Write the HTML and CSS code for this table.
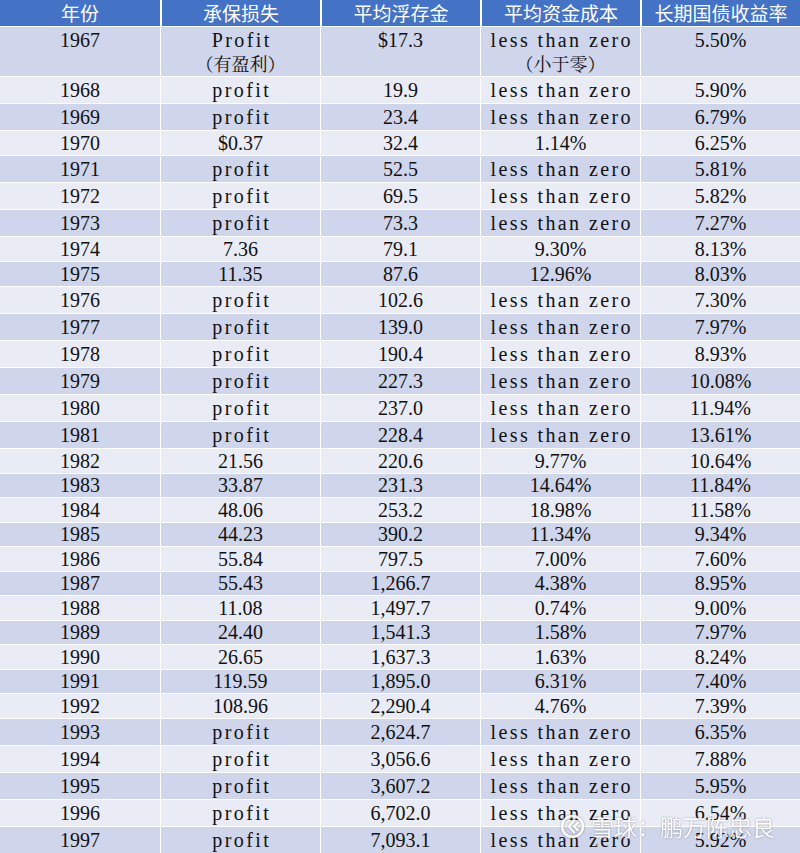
FILE: index.html
```html
<!DOCTYPE html>
<html lang="zh-CN">
<head>
<meta charset="utf-8">
<title>伯克希尔浮存金成本</title>
<link rel="stylesheet" href="styles.css">
</head>
<body>
<div class="page">
<table class="data">
  <thead>
    <tr class="head"><th>年份</th><th>承保损失</th><th>平均浮存金</th><th>平均资金成本</th><th>长期国债收益率</th></tr>
  </thead>
  <tbody>
    <tr class="first d"><td class="num">1967</td><td class="txt">Profit<br><span class="cjk">（有盈利）</span></td><td class="num">$17.3</td><td class="txt">less than zero<br><span class="cjk">（小于零）</span></td><td class="num">5.50%</td></tr>
    <tr class="t l"><td class="num">1968</td><td class="txt">profit</td><td class="num">19.9</td><td class="txt">less than zero</td><td class="num">5.90%</td></tr>
    <tr class="t d"><td class="num">1969</td><td class="txt">profit</td><td class="num">23.4</td><td class="txt">less than zero</td><td class="num">6.79%</td></tr>
    <tr class="n l"><td class="num">1970</td><td class="num">$0.37</td><td class="num">32.4</td><td class="num">1.14%</td><td class="num">6.25%</td></tr>
    <tr class="t d"><td class="num">1971</td><td class="txt">profit</td><td class="num">52.5</td><td class="txt">less than zero</td><td class="num">5.81%</td></tr>
    <tr class="t l"><td class="num">1972</td><td class="txt">profit</td><td class="num">69.5</td><td class="txt">less than zero</td><td class="num">5.82%</td></tr>
    <tr class="t d"><td class="num">1973</td><td class="txt">profit</td><td class="num">73.3</td><td class="txt">less than zero</td><td class="num">7.27%</td></tr>
    <tr class="n l"><td class="num">1974</td><td class="num">7.36</td><td class="num">79.1</td><td class="num">9.30%</td><td class="num">8.13%</td></tr>
    <tr class="n d"><td class="num">1975</td><td class="num">11.35</td><td class="num">87.6</td><td class="num">12.96%</td><td class="num">8.03%</td></tr>
    <tr class="t l"><td class="num">1976</td><td class="txt">profit</td><td class="num">102.6</td><td class="txt">less than zero</td><td class="num">7.30%</td></tr>
    <tr class="t d"><td class="num">1977</td><td class="txt">profit</td><td class="num">139.0</td><td class="txt">less than zero</td><td class="num">7.97%</td></tr>
    <tr class="t l"><td class="num">1978</td><td class="txt">profit</td><td class="num">190.4</td><td class="txt">less than zero</td><td class="num">8.93%</td></tr>
    <tr class="t d"><td class="num">1979</td><td class="txt">profit</td><td class="num">227.3</td><td class="txt">less than zero</td><td class="num">10.08%</td></tr>
    <tr class="t l"><td class="num">1980</td><td class="txt">profit</td><td class="num">237.0</td><td class="txt">less than zero</td><td class="num">11.94%</td></tr>
    <tr class="t d"><td class="num">1981</td><td class="txt">profit</td><td class="num">228.4</td><td class="txt">less than zero</td><td class="num">13.61%</td></tr>
    <tr class="s l"><td class="num">1982</td><td class="num">21.56</td><td class="num">220.6</td><td class="num">9.77%</td><td class="num">10.64%</td></tr>
    <tr class="s d"><td class="num">1983</td><td class="num">33.87</td><td class="num">231.3</td><td class="num">14.64%</td><td class="num">11.84%</td></tr>
    <tr class="s l"><td class="num">1984</td><td class="num">48.06</td><td class="num">253.2</td><td class="num">18.98%</td><td class="num">11.58%</td></tr>
    <tr class="s d"><td class="num">1985</td><td class="num">44.23</td><td class="num">390.2</td><td class="num">11.34%</td><td class="num">9.34%</td></tr>
    <tr class="s l"><td class="num">1986</td><td class="num">55.84</td><td class="num">797.5</td><td class="num">7.00%</td><td class="num">7.60%</td></tr>
    <tr class="s d"><td class="num">1987</td><td class="num">55.43</td><td class="num">1,266.7</td><td class="num">4.38%</td><td class="num">8.95%</td></tr>
    <tr class="s l"><td class="num">1988</td><td class="num">11.08</td><td class="num">1,497.7</td><td class="num">0.74%</td><td class="num">9.00%</td></tr>
    <tr class="s d"><td class="num">1989</td><td class="num">24.40</td><td class="num">1,541.3</td><td class="num">1.58%</td><td class="num">7.97%</td></tr>
    <tr class="s l"><td class="num">1990</td><td class="num">26.65</td><td class="num">1,637.3</td><td class="num">1.63%</td><td class="num">8.24%</td></tr>
    <tr class="s d"><td class="num">1991</td><td class="num">119.59</td><td class="num">1,895.0</td><td class="num">6.31%</td><td class="num">7.40%</td></tr>
    <tr class="s l"><td class="num">1992</td><td class="num">108.96</td><td class="num">2,290.4</td><td class="num">4.76%</td><td class="num">7.39%</td></tr>
    <tr class="t d"><td class="num">1993</td><td class="txt">profit</td><td class="num">2,624.7</td><td class="txt">less than zero</td><td class="num">6.35%</td></tr>
    <tr class="t l"><td class="num">1994</td><td class="txt">profit</td><td class="num">3,056.6</td><td class="txt">less than zero</td><td class="num">7.88%</td></tr>
    <tr class="t d"><td class="num">1995</td><td class="txt">profit</td><td class="num">3,607.2</td><td class="txt">less than zero</td><td class="num">5.95%</td></tr>
    <tr class="t l"><td class="num">1996</td><td class="txt">profit</td><td class="num">6,702.0</td><td class="txt">less than zero</td><td class="num">6.54%</td></tr>
    <tr class="t d"><td class="num">1997</td><td class="txt">profit</td><td class="num">7,093.1</td><td class="txt">less than zero</td><td class="num">5.92%</td></tr>
  </tbody>
</table>
<div class="watermark">
  <svg class="wm-logo" viewBox="0 0 24 24" width="25" height="25" aria-hidden="true">
    <circle cx="12" cy="12" r="10" fill="none" stroke="#fff" stroke-width="2.4"/>
    <path d="M13.5 6.5 L8.5 12 L13.5 17.5" fill="none" stroke="#fff" stroke-width="2.2" stroke-linecap="round" stroke-linejoin="round"/>
    <path d="M17 8.5 L13.5 12 L17 15.5" fill="none" stroke="#fff" stroke-width="2.2" stroke-linecap="round" stroke-linejoin="round"/>
  </svg>
  <span class="wm-text">雪球：鹏万陈忠良</span>
</div>
</div>
</body>
</html>
```
FILE: styles.css
```css
html, body {
  margin: 0;
  padding: 0;
  background: #ffffff;
}

.page {
  position: relative;
  width: 800px;
  height: 853px;
  overflow: hidden;
}

.data {
  width: 800px;
  table-layout: fixed;
  border-collapse: separate;
  border-spacing: 0;
  color: #111;
}

.data th,
.data td {
  padding: 0;
  text-align: center;
  vertical-align: middle;
  white-space: nowrap;
  overflow: hidden;
}

.data td + td {
  border-left: 1px solid #ffffff;
}

.data tbody td {
  border-top: 1px solid #ffffff;
}

.head {
  height: 26px;
  background: #4472c4;
}

.head th {
  color: #ffffff;
  font-family: "Noto Sans CJK SC", "Noto Sans", sans-serif;
  font-weight: normal;
  font-size: 19px;
  line-height: 26px;
}

.head th + th {
  border-left: 2px solid #ffffff;
}

.d { background: #cfd5ea; }
.l { background: #e9ebf5; }

.first { height: 49px; }
.first td {
  vertical-align: top;
  padding-top: 2px;
  line-height: 23px;
}

.t { height: 27px; }
.n { height: 25px; }
.s { height: 24.5px; }

.num {
  font-family: "Liberation Serif", "Times New Roman", serif;
  font-size: 20px;
  line-height: 22px;
}

.txt {
  font-family: "Liberation Serif", "Times New Roman", serif;
  font-size: 20px;
  letter-spacing: 2.4px;
  padding-left: 2.4px !important;
  line-height: 22px;
}

.cjk {
  font-family: "Noto Serif CJK SC", "Noto Sans CJK SC", serif;
  font-size: 18px;
  letter-spacing: 0;
  margin-left: -2.4px;
}

.watermark {
  position: absolute;
  left: 560px;
  top: 812px;
  display: flex;
  align-items: center;
  gap: 6px;
  opacity: 0.9;
}

.wm-logo {
  filter: drop-shadow(0 0 1px rgba(80, 80, 90, 0.6));
}

.wm-text {
  color: #ffffff;
  font-family: "Noto Sans CJK SC", sans-serif;
  font-size: 23px;
  line-height: 28px;
  text-shadow: 0 0 2px rgba(70, 70, 80, 0.6);
  letter-spacing: 0;
}
```
